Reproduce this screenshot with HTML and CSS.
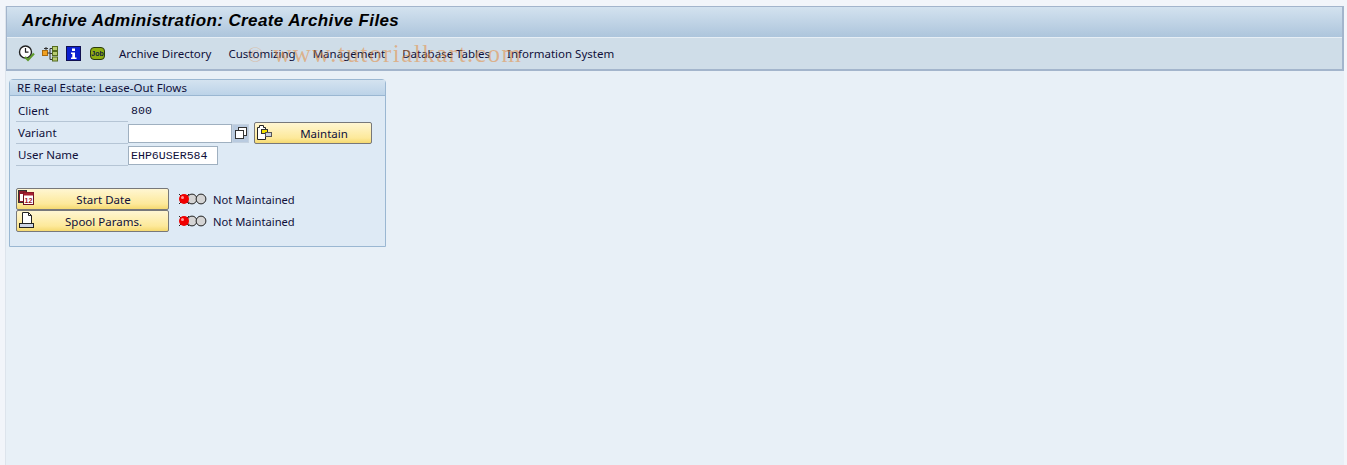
FILE: index.html
```html
<!DOCTYPE html>
<html lang="en">
<head>
<meta charset="utf-8">
<title>Archive Administration: Create Archive Files</title>
<link rel="stylesheet" href="styles.css">
</head>
<body>
<div class="page">
  <header class="head">
    <h1 class="title">Archive Administration: Create Archive Files</h1>
    <nav class="toolbar">
      <span class="slot"><svg width="17" height="17" viewBox="0 0 17 17"><circle cx="7.500" cy="7" r="6" fill="#fff" stroke="#222" stroke-width="1.400"/><path d="M7.500 3v4.200h3" fill="none" stroke="#222" stroke-width="1.200"/><path d="M7 12l3 3 6-6.500" fill="none" stroke="#5f9a2c" stroke-width="2.200"/></svg></span>
      <span class="slot"><svg width="16" height="16" viewBox="0 0 16 16"><rect x="0.500" y="4.500" width="5" height="5" fill="#f0a020" stroke="#a86a10"/><path d="M5.500 7h2.500M8 2.500v11M8 2.500h2.500M8 7.500h2.500M8 13.500h2.500M2 2.500h4M4 1v3" fill="none" stroke="#333"/><rect x="10.500" y="0.500" width="5" height="4" fill="#b8cc70" stroke="#556b20"/><rect x="10.500" y="5.500" width="5" height="4" fill="#b8cc70" stroke="#556b20"/><rect x="10.500" y="11" width="5" height="4" fill="#b8cc70" stroke="#556b20"/></svg></span>
      <span class="slot"><svg width="15" height="15" viewBox="0 0 15 15"><rect x="0.500" y="0.500" width="14" height="14" fill="#0a1fd0" stroke="#101050"/><rect x="6" y="2.500" width="3" height="2.500" fill="#fff"/><path d="M5 6.500h4v5h1.500v1.500h-5.500v-1.500h1.300v-3.500h-1.300z" fill="#fff"/></svg></span>
      <span class="slot"><span class="job">Job</span></span>
      <a class="menu m1">Archive Directory</a>
      <a class="menu">Customizing</a>
      <a class="menu">Management</a>
      <a class="menu">Database Tables</a>
      <a class="menu">Information System</a>
    </nav>
  </header>
  <section class="panel">
    <h2 class="panel-title">RE Real Estate: Lease-Out Flows</h2>
    <div class="form">
      <div class="row">
        <span class="label">Client</span>
        <span class="mono value">800</span>
      </div>
      <div class="row">
        <span class="label">Variant</span>
        <span class="input variant"></span>
        <span class="f4">
          <svg width="12" height="12" viewBox="0 0 12 12"><rect x="3.500" y="0.500" width="8" height="8" fill="#fff" stroke="#333"/><rect x="0.500" y="3.500" width="8" height="8" fill="#fff" stroke="#333"/></svg>
        </span>
        <button class="btn maintain">
          <svg class="btn-icon" width="17" height="17" viewBox="0 0 17 17"><path d="M1.500 3.500h2v-2h4v2h2v12h-8z" fill="#fff" stroke="#222"/><rect x="5.500" y="5.500" width="6" height="4" fill="#f2e100" stroke="#333"/><rect x="9.500" y="8.500" width="6" height="4" fill="#c9cfe0" stroke="#555"/></svg>
          <span class="btn-text">Maintain</span>
        </button>
      </div>
      <div class="row">
        <span class="label">User Name</span>
        <span class="input user mono">EHP6USER584</span>
      </div>
    </div>
    <div class="actions">
      <div class="action">
        <button class="btn wide">
          <svg class="btn-icon" width="17" height="17" viewBox="0 0 17 17"><rect x="0.500" y="0.500" width="8" height="12" fill="#8c1c2c" stroke="#333"/><rect x="2" y="4" width="3" height="7" fill="#fff"/><rect x="5.500" y="2.500" width="10" height="12" fill="#fff" stroke="#6c1020"/><rect x="5.500" y="2.500" width="10" height="3" fill="#a82030"/><text x="6.500" y="13" class="cal-num">12</text></svg>
          <span class="btn-text">Start Date</span>
        </button>
        <svg class="lights" width="29" height="12" viewBox="0 0 29 12"><path d="M1 1l10 10M11 1l-10 10" stroke="#222"/><circle cx="14" cy="6" r="4.900" fill="#d4d4d4" stroke="#222"/><circle cx="23" cy="6" r="4.900" fill="#d4d4d4" stroke="#222"/><circle cx="6" cy="6" r="5" fill="#f00000"/><circle cx="4.500" cy="4.500" r="1.500" fill="#ff9a9a"/></svg>
        <span class="status">Not Maintained</span>
      </div>
      <div class="action">
        <button class="btn wide">
          <svg class="btn-icon" width="17" height="17" viewBox="0 0 17 17"><path d="M4.500 0.500h6l3 3v8h-9z" fill="#fff" stroke="#222"/><path d="M10.500 0.500v3h3" fill="none" stroke="#222"/><rect x="1.500" y="11.500" width="14" height="4" fill="#cfd6e6" stroke="#222"/></svg>
          <span class="btn-text">Spool Params.</span>
        </button>
        <svg class="lights" width="29" height="12" viewBox="0 0 29 12"><path d="M1 1l10 10M11 1l-10 10" stroke="#222"/><circle cx="14" cy="6" r="4.900" fill="#d4d4d4" stroke="#222"/><circle cx="23" cy="6" r="4.900" fill="#d4d4d4" stroke="#222"/><circle cx="6" cy="6" r="5" fill="#f00000"/><circle cx="4.500" cy="4.500" r="1.500" fill="#ff9a9a"/></svg>
        <span class="status">Not Maintained</span>
      </div>
    </div>
  </section>
</div>
<div class="watermark"><span class="wm-logo">©</span>www.tutorialkart.com</div>
</body>
</html>
```

FILE: styles.css
```css
* { box-sizing: border-box; }
html, body { margin: 0; height: 100%; overflow: hidden; background: #f2f5fa; }
body { font-family: "Noto Sans", "DejaVu Sans", sans-serif; font-size: 11.500px; color: #10103a; }
.page { margin: 6px 3px 0 5px; height: 459px; background: #e8f0f7; border-left: 1px solid #dde4ec; }
.head { border: 1px solid #a3b5cc; border-width: 1px 2px 2px 1px; }
.title {
  margin: 0; height: 30px; padding-left: 15px;
  font: italic bold 17px/27px "Liberation Sans", sans-serif; letter-spacing: 0.400px; color: #000;
  background: linear-gradient(#d3e2ef, #adc5dc);
}
.toolbar {
  height: 32px; display: flex; align-items: center; padding-left: 11px;
  background: #cfdde8; border-top: 1px solid #e6eef5;
}
.slot { display: flex; width: 24px; flex: none; }
.job {
  width: 15px; height: 13px; border-radius: 4px; background: #8fae10; border: 1px solid #2a3a10;
  font: bold 7px/11px "Liberation Sans", sans-serif; color: #102040; text-align: center;
}
.menu { margin-right: 17px; white-space: nowrap; color: #10103a; }
.m1 { margin-left: 5px; }
.panel { margin: 8px 0 0 3px; width: 377px; height: 168px; background: #deeaf5; border: 1px solid #9ab7d2; border-radius: 4px 4px 0 0; }
.panel-title { margin: 0; height: 16px; padding-left: 7px; font-weight: 400; font-size: 11.500px; line-height: 15px; color: #10103a; background: linear-gradient(#d4e3f0, #bcd3e8); border-bottom: 1px solid #9ab7d2; }
.form { padding: 4px 0 0 6px; }
.row { display: flex; align-items: center; height: 22px; }
.label { width: 112px; height: 22px; padding: 3px 0 0 2px; border-bottom: 1px solid #b5c5d5; flex: none; }
.mono { font: 11.600px/16px "Liberation Mono", monospace; color: #10103a; }
.value { padding-left: 3px; }
.input { display: block; height: 19px; background: #fff; border: 1px solid #9fb0c0; flex: none; padding-left: 2px; line-height: 18px; }
.variant { width: 104px; }
.user { width: 90px; }
.f4 { width: 17px; height: 19px; display: flex; align-items: center; justify-content: center; background: #b9cbe0; border: 1px solid #c5d2e0; margin-right: 5px; }
.btn {
  position: relative; display: block; height: 22px; padding: 0; border: 1px solid #77787a; border-radius: 2px;
  background: linear-gradient(#fff6d2, #fde99a 75%, #f5d970); font: 11.500px "Noto Sans", sans-serif; color: #10103a; flex: none;
}
.btn-icon { position: absolute; left: 1px; top: 1px; }
.btn-text { display: block; text-align: center; padding-left: 22px; }
.cal-num { font: bold 7px "Liberation Sans", sans-serif; fill: #a01020; }
.maintain { width: 118px; }
.wide { width: 153px; }
.actions { padding: 22px 0 0 6px; }
.action { display: flex; align-items: center; height: 22px; }
.lights { display: block; flex: none; margin: 0 6px 0 9px; }
.status { white-space: nowrap; font-size: 11.200px; }
.watermark {
  position: absolute; left: 247px; top: 39px; font: 25px/30px "Liberation Serif", serif; letter-spacing: 1.500px;
  color: rgba(230, 140, 60, 0.55); pointer-events: none; white-space: nowrap;
}
.wm-logo { font-size: 22px; margin-right: 8px; color: rgba(230, 140, 60, 0.35); }
```
